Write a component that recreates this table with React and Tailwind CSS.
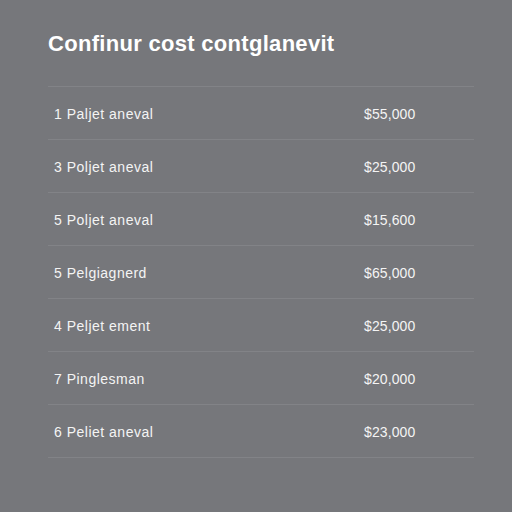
const rows = [
  { label: "1 Paljet aneval", price: "$55,000" },
  { label: "3 Poljet aneval", price: "$25,000" },
  { label: "5 Poljet aneval", price: "$15,600" },
  { label: "5 Pelgiagnerd", price: "$65,000" },
  { label: "4 Peljet ement", price: "$25,000" },
  { label: "7 Pinglesman", price: "$20,000" },
  { label: "6 Peliet aneval", price: "$23,000" },
];

export default function App() {
  return (
    <div
      className="w-[512px] h-[512px] bg-[#76777b] text-[#f4f4f4] overflow-hidden"
      style={{ fontFamily: "'Liberation Sans', Arial, sans-serif" }}
    >
      <div className="pl-[48px] pr-[38px] pt-[31px]">
        <h1 className="text-[22px] font-bold leading-[26px] tracking-[0.3px] text-white">
          Confinur cost contglanevit
        </h1>
        <div className="mt-[29px] border-t border-[#828387]">
          {rows.map((r, i) => (
            <div
              key={i}
              className="flex items-center h-[53px] pt-[3px] border-b border-[#828387] text-[14px] pl-[6px]"
            >
              <span className="flex-1 tracking-[0.5px]">{r.label}</span>
              <span className="w-[110px] tracking-[0.1px]">{r.price}</span>
            </div>
          ))}
        </div>
      </div>
    </div>
  );
}
